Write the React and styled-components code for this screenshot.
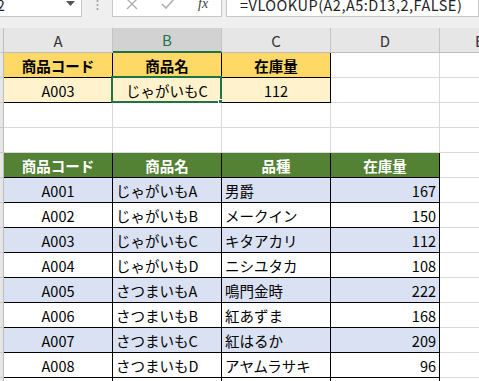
import React from "react";
import styled, { createGlobalStyle, css } from "styled-components";

const GlobalStyle = createGlobalStyle`
  html, body { margin: 0; padding: 0; background: #ffffff; overflow: hidden; }
  body { font-family: "Noto Sans CJK JP", "Noto Sans", sans-serif; }
`;

const Page = styled.div`
  width: 479px;
  height: 381px;
  overflow: hidden;
  background: #ffffff;
`;

const FormulaBar = styled.div`
  display: flex;
  align-items: stretch;
  height: 26px;
  margin-top: -9px;
  padding-bottom: 11px;
  background: #efefef;
  font-family: "Noto Sans CJK JP", sans-serif;
`;

const NameBox = styled.div`
  box-sizing: border-box;
  display: flex;
  align-items: center;
  justify-content: space-between;
  margin-left: -16px;
  width: 98px;
  padding: 0 6px 0 3px;
  background: #fff;
  border: 1px solid #c8c8c8;
  font-size: 14.5px;
  color: #222;
`;

const Divider = styled.div`
  width: 30px;
  display: flex;
  align-items: center;
  justify-content: center;
`;

const IconBox = styled.div`
  box-sizing: border-box;
  width: 110px;
  display: flex;
  align-items: center;
  justify-content: flex-start;
  gap: 23px;
  padding: 0 0 0 13px;
  background: #fff;
  border: 1px solid #c8c8c8;
`;

const Fx = styled.span`
  font-family: "Liberation Serif", serif;
  font-style: italic;
  font-size: 14px;
  color: #444;
`;

const FormulaInput = styled.div`
  box-sizing: border-box;
  flex: 1;
  margin-left: 4px;
  display: flex;
  align-items: center;
  padding-left: 13px;
  background: #fff;
  border: 1px solid #c8c8c8;
  font-size: 14.5px;
  letter-spacing: 0.5px;
  color: #222;
  white-space: nowrap;
`;

const Sheet = styled.div`
  display: grid;
  grid-template-columns: 4px 109px 109px 109px 109px 80px;
  grid-auto-rows: 25px;
  font-family: "Noto Sans CJK JP", sans-serif;
  font-size: 14.5px;
`;

const ColHead = styled.div`
  box-sizing: border-box;
  display: flex;
  align-items: center;
  justify-content: center;
  background: ${(p) => (p.$selected ? "#d2d2d2" : "#e6e6e6")};
  color: ${(p) => (p.$selected ? "#217346" : "#333")};
  border-right: 1px solid #c4c4c4;
  border-bottom: ${(p) => (p.$selected ? "2px solid #217346" : "1px solid #bdbdbd")};
  font-family: "Noto Sans CJK JP", sans-serif;
  font-size: 15px;
`;

const RowHead = styled.div`
  box-sizing: border-box;
  background: #e6e6e6;
  border-right: 1px solid #bdbdbd;
  border-bottom: 1px solid #c8c8c8;
`;

const Cell = styled.div`
  box-sizing: border-box;
  position: relative;
  display: flex;
  align-items: center;
  white-space: nowrap;
  padding: 0 3px;
  color: #000;
  background: ${(p) => p.$bg || "#fff"};
  border-right: 1px solid ${(p) => (p.$edge ? "#000" : "#d9d9d9")};
  border-bottom: 1px solid ${(p) => (p.$edge ? "#000" : "#d9d9d9")};
  justify-content: ${(p) =>
    p.$align === "center" ? "center" : p.$align === "right" ? "flex-end" : "flex-start"};
  ${(p) =>
    p.$bold &&
    css`
      font-weight: 700;
    `}
  ${(p) =>
    p.$light &&
    css`
      color: #fff;
    `}
`;

const Selection = styled.div`
  position: absolute;
  left: -2px;
  top: -2px;
  right: -1px;
  bottom: -1px;
  border: 2px solid #217346;
  pointer-events: none;
`;

const FillHandle = styled.div`
  position: absolute;
  right: -4px;
  bottom: -4px;
  width: 5px;
  height: 5px;
  background: #217346;
  border: 1px solid #fff;
`;

const cols = ["A", "B", "C", "D", "E"];

const data = [
  ["A001", "じゃがいもA", "男爵", "167"],
  ["A002", "じゃがいもB", "メークイン", "150"],
  ["A003", "じゃがいもC", "キタアカリ", "112"],
  ["A004", "じゃがいもD", "ニシユタカ", "108"],
  ["A005", "さつまいもA", "鳴門金時", "222"],
  ["A006", "さつまいもB", "紅あずま", "168"],
  ["A007", "さつまいもC", "紅はるか", "209"],
  ["A008", "さつまいもD", "アヤムラサキ", "96"],
];

const YELLOW = "#ffd966";
const PALE = "#fff2cc";
const GREEN = "#548235";
const BLUE = "#d9e1f2";

function EmptyRow({ n }) {
  return (
    <>
      <RowHead />
      {Array.from({ length: n }).map((_, i) => (
        <Cell key={i} />
      ))}
    </>
  );
}

export default function App() {
  return (
    <Page>
      <GlobalStyle />
      <FormulaBar>
        <NameBox>
          <span>A2</span>
          <svg width="9" height="6" viewBox="0 0 9 6">
            <path d="M0 0 L9 0 L4.5 5 Z" fill="#555" />
          </svg>
        </NameBox>
        <Divider>
          <svg width="3" height="14" viewBox="0 0 3 14">
            <circle cx="1.5" cy="4" r="1" fill="#999" />
            <circle cx="1.5" cy="8" r="1" fill="#999" />
            <circle cx="1.5" cy="12" r="1" fill="#999" />
          </svg>
        </Divider>
        <IconBox>
          <svg width="12" height="12" viewBox="0 0 12 12">
            <path d="M1 1 L11 11 M11 1 L1 11" stroke="#b0b0b0" strokeWidth="1.4" fill="none" />
          </svg>
          <svg width="14" height="12" viewBox="0 0 14 12">
            <path d="M1 6 L5 10 L13 1" stroke="#b0b0b0" strokeWidth="1.6" fill="none" />
          </svg>
          <Fx>fx</Fx>
        </IconBox>
        <FormulaInput>=VLOOKUP(A2,A5:D13,2,FALSE)</FormulaInput>
      </FormulaBar>

      <Sheet>
        <RowHead />
        {cols.map((c) => (
          <ColHead key={c} $selected={c === "B"}>
            {c}
          </ColHead>
        ))}

        <RowHead />
        <Cell $bg={YELLOW} $edge $bold $align="center">商品コード</Cell>
        <Cell $bg={YELLOW} $edge $bold $align="center">商品名</Cell>
        <Cell $bg={YELLOW} $edge $bold $align="center">在庫量</Cell>
        <Cell />
        <Cell />

        <RowHead />
        <Cell $bg={PALE} $edge $align="center">A003</Cell>
        <Cell $bg={PALE} $edge $align="center">
          じゃがいもC
          <Selection />
          <FillHandle />
        </Cell>
        <Cell $bg={PALE} $edge $align="center">112</Cell>
        <Cell />
        <Cell />

        <EmptyRow n={5} />
        <EmptyRow n={5} />

        <RowHead />
        <Cell $bg={GREEN} $edge $bold $light $align="center">商品コード</Cell>
        <Cell $bg={GREEN} $edge $bold $light $align="center">商品名</Cell>
        <Cell $bg={GREEN} $edge $bold $light $align="center">品種</Cell>
        <Cell $bg={GREEN} $edge $bold $light $align="center">在庫量</Cell>
        <Cell />

        {data.map((r, i) => {
          const bg = i % 2 === 0 ? BLUE : "#fff";
          return (
            <React.Fragment key={r[0]}>
              <RowHead />
              <Cell $bg={bg} $edge $align="center">{r[0]}</Cell>
              <Cell $bg={bg} $edge>{r[1]}</Cell>
              <Cell $bg={bg} $edge>{r[2]}</Cell>
              <Cell $bg={bg} $edge $align="right">{r[3]}</Cell>
              <Cell />
            </React.Fragment>
          );
        })}

        <RowHead />
        <Cell $edge />
        <Cell $edge />
        <Cell $edge />
        <Cell $edge />
        <Cell />
      </Sheet>
    </Page>
  );
}
